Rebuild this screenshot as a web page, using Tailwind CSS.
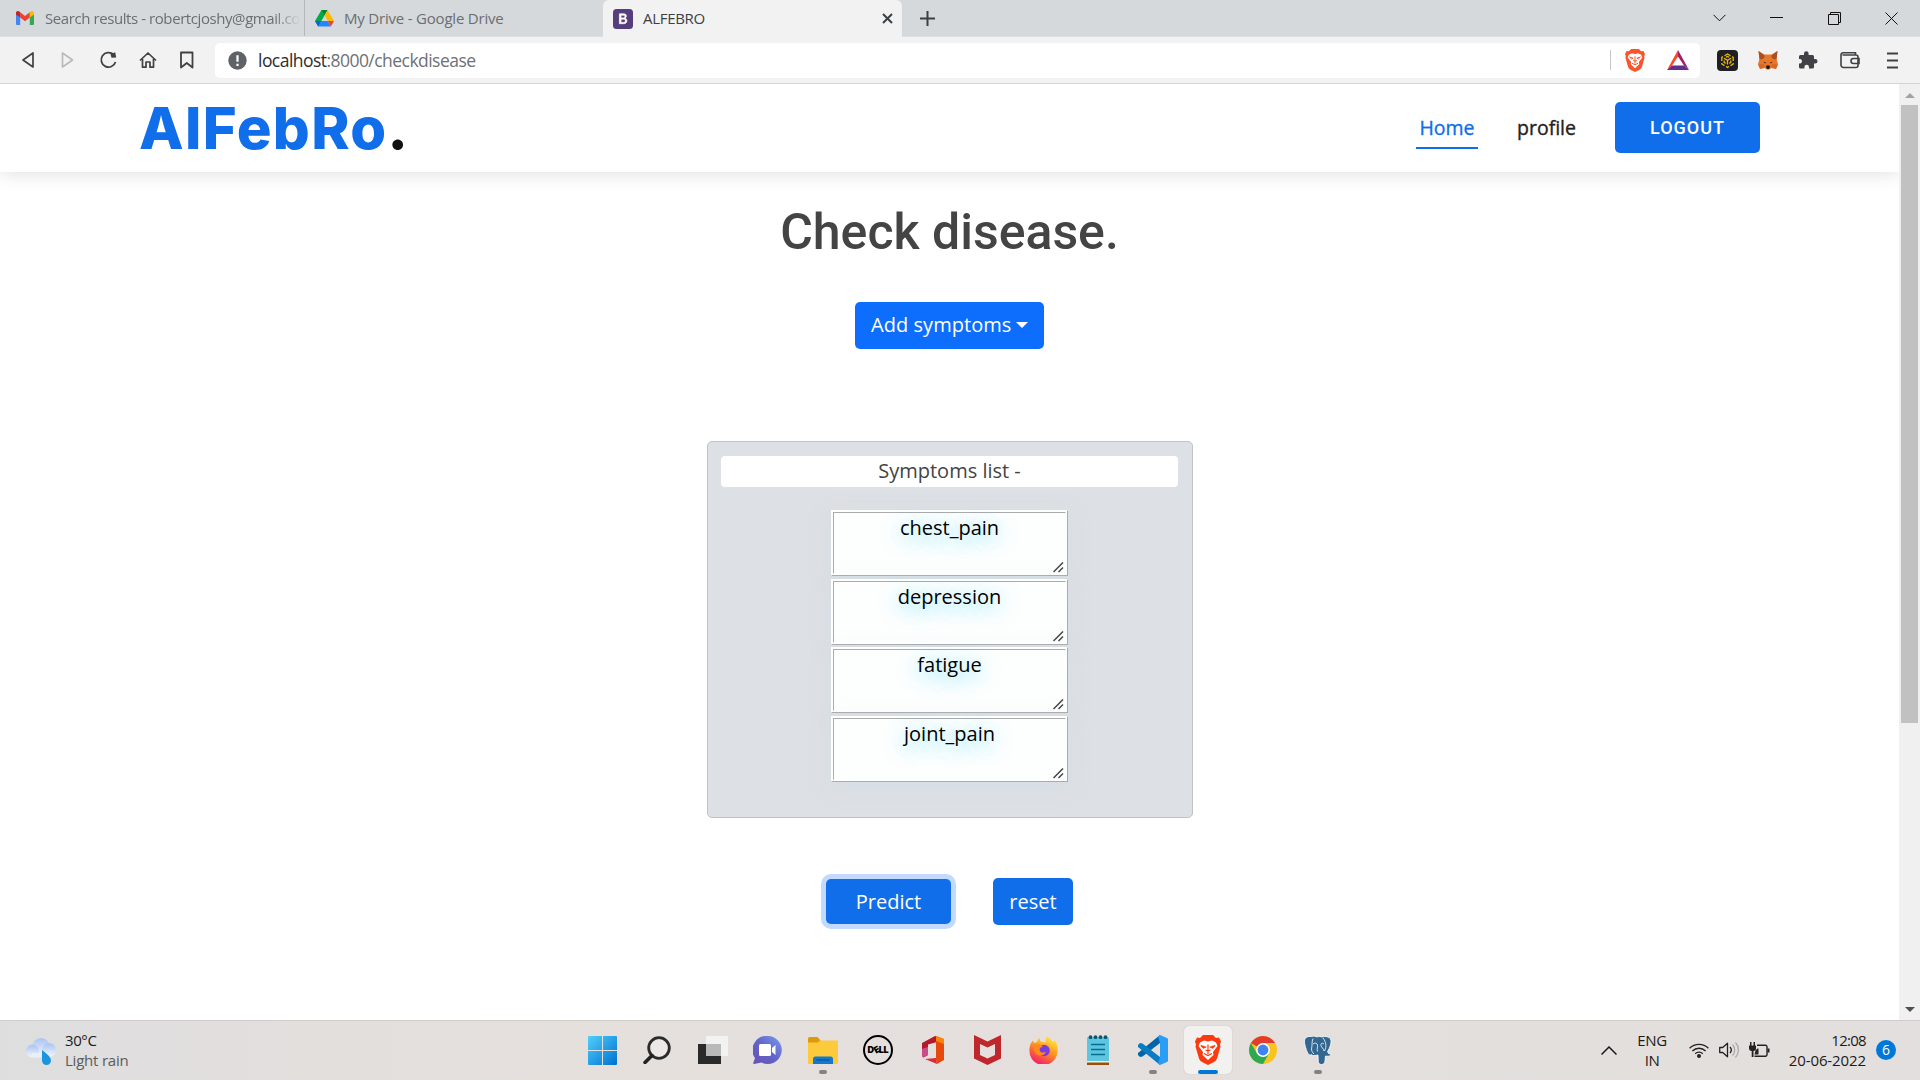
<!DOCTYPE html>
<html lang="en">
<head>
<meta charset="utf-8">
<title>ALFEBRO</title>
<script src="https://cdn.jsdelivr.net/npm/@tailwindcss/browser@4"></script>
</head>
<body class="w-[1920px] h-[1080px] overflow-hidden flex flex-col bg-white font-['Open_Sans',sans-serif]">

<!-- Tab strip -->
<div class="h-[37px] shrink-0 flex bg-[#d5d9dc] text-[15px] text-[#6b6e72] border-b border-[#dde0e3]">
  <div class="w-[305px] flex items-center pl-4 pr-1 border-r border-[#b4b8bc] bg-clip-padding">
    <svg class="w-[18px] h-[14px] shrink-0 mr-[11px]" viewBox="0 0 18 14"><path d="M0 1.8V13a1 1 0 0 0 1 1h3.2V6z" fill="#4285f4"/><path d="M18 1.8V13a1 1 0 0 1-1 1h-3.200V6z" fill="#34a853"/><path d="M4.200 1.200 9 5l4.800-3.800V6.600L9 10.300 4.200 6.600z" fill="#ea4335"/><path d="M0 1.900C0 .2 2-.6 3.300.5l.9.700v5.400L0 3.500z" fill="#c5221f"/><path d="M18 1.900C18 .2 16-.6 14.700.5l-.9.700v5.400L18 3.500z" fill="#fbbc04"/></svg>
    <div class="flex-1 overflow-hidden whitespace-nowrap tracking-[-0.42px] mask-r-from-90%">Search results - robertcjoshy@gmail.com</div>
  </div>
  <div class="w-[298px] flex items-center pl-[10px]">
    <svg class="w-[19px] h-[17px] shrink-0 mr-[10px]" viewBox="0 0 19 17"><path d="M6.500 0h6L9.600 5.300 3.300 16.500 0 11z" fill="#00ac47"/><path d="M6.500 0h6l-3 5.300z" fill="#00832d"/><path d="M12.500 0 19 11h-6.200L9.500 5.300z" fill="#ffba00"/><path d="M6.200 11h6.600l3.100 5.500H3.200z" fill="#2684fc"/><path d="M12.800 11H19l-3.100 5.500z" fill="#ea4335"/><path d="M0 11h6.200l-3 5.500z" fill="#0066da"/></svg>
    <span class="tracking-[-0.2px]">My Drive - Google Drive</span>
  </div>
  <div class="w-[299px] h-[37px] flex items-center bg-[#f2f2f2] rounded-t-[6px] pl-[10px] pr-[9px] text-[#3c4043]">
    <svg class="w-5 h-5 mr-[10px]" viewBox="0 0 20 20"><rect width="20" height="20" rx="3.500" fill="#563d7c"/><path d="M6.400 4.800h4.300c1.700 0 2.700.8 2.700 2.300 0 1.100-.7 1.900-1.600 2.200 1.300.2 2.100 1.200 2.100 2.500 0 1.900-1.300 2.900-3.300 2.900H6.400zM8 8.900h2.200c1.100 0 1.700-.5 1.700-1.400S11.400 6.200 10.300 6.200H8zm0 4.500h2.500c1.200 0 1.900-.6 1.900-1.600s-.7-1.600-2-1.600H8z" fill="#fff" stroke="#fff" stroke-width=".7"/></svg>
    <span class="tracking-[-0.3px]">ALFEBRO</span>
    <svg class="w-[11px] h-[11px] ml-auto" viewBox="0 0 11 11"><path d="m1 1 9 9M10 1l-9 9" stroke="#3c4043" stroke-width="2"/></svg>
  </div>
  <svg class="w-[15px] h-[15px] ml-[18px] mt-[11px]" viewBox="0 0 15 15"><path d="M7.500 0v15M0 7.500h15" stroke="#3c4043" stroke-width="2"/></svg>
  <div class="ml-auto flex items-center gap-[44.400px] pr-[22px] text-[#111]">
    <svg class="w-[13px] h-2" viewBox="0 0 13 8"><path d="m.5.8 6 6 6-6" fill="none" stroke="currentColor"/></svg>
    <svg class="w-[13px] h-[2px]" viewBox="0 0 13 2"><path d="M0 .5h13" stroke="currentColor"/></svg>
    <svg class="w-[13px] h-[13px]" viewBox="0 0 13 13"><path d="M.5 2.500h10v10H.5zM2.500 2.500v-2h10v10h-2" fill="none" stroke="currentColor"/></svg>
    <svg class="w-[13px] h-[13px]" viewBox="0 0 13 13"><path d="m.5.5 12 12m0-12-12 12" stroke="currentColor"/></svg>
  </div>
</div>

<!-- Toolbar -->
<div class="h-[47px] shrink-0 flex items-center bg-[#f2f2f2] border-b border-[#d3d4d6] pl-[20px] text-[#3f4144]">
  <div class="w-[195px] flex items-center gap-[19.300px]">
    <svg class="w-5 h-5" viewBox="0 0 20 20"><path d="M13 3v14L3 10z" fill="none" stroke="currentColor" stroke-width="1.700" stroke-linejoin="round"/></svg>
    <svg class="w-5 h-5" viewBox="0 0 20 20"><path d="M3.500 3v14l10-7z" fill="none" stroke="#b9babb" stroke-width="1.700" stroke-linejoin="round"/></svg>
    <svg class="w-5 h-5" viewBox="0 0 20 20"><path d="M14.500 4.500A7.300 7.300 0 1 0 16.500 12" fill="none" stroke="currentColor" stroke-width="1.800"/><path d="M11.500 4.200 16.200 2.200l1 5.300-4.700.2z" fill="currentColor"/></svg>
    <svg class="w-5 h-5" viewBox="0 0 20 20"><path d="M2 10.500 10 3l8 7.500M4.500 9v8.200H8V12h4v5.200h3.500V9" fill="none" stroke="currentColor" stroke-width="1.700" stroke-linejoin="round"/></svg>
    <svg class="w-5 h-5" viewBox="0 0 20 20"><path d="M4 2.500h11.500V17.500L9.800 13 4 17.500z" fill="none" stroke="currentColor" stroke-width="1.800" stroke-linejoin="round"/></svg>
  </div>
  <div class="w-[1485px] h-[35px] flex items-center bg-white rounded-[5px] pl-[13px] pr-[11px]">
    <svg class="w-[19px] h-[19px]" viewBox="0 0 19 19"><circle cx="9.500" cy="9.500" r="9.200" fill="#5f6368"/><path d="M9.500 4.200v6.600M9.500 12.700v2.200" stroke="#fff" stroke-width="2.200"/></svg>
    <span class="ml-[11px] text-[17.500px] tracking-[-0.54px] text-[#6e7175]"><span class="text-[#2b2d30]">localhost</span>:8000/checkdisease</span>
    <div class="ml-auto w-px h-5 bg-[#c4c5c7]"></div>
    <svg class="w-[20px] h-[23px] ml-[14px] mr-px" viewBox="0 0 26 30"><path d="M8 0h10l3 3 3-.5 2 4-1 3 .5 2-3.500 12c-.5 1.500-1.500 2.500-3 3.500l-6 3-6-3c-1.500-1-2.500-2-3-3.500L.5 11.500 1 9.500 0 6.500l2-4 3 .5z" fill="#fb542b"/><path d="M13 6.500 9 5.500 5 7.500 3.500 11l4.500 6-.5 3L13 25l5.500-5-.5-3 4.500-6L21 7.500l-4-2z" fill="#fff"/><path d="m6 10.500 4.500 1.500-2 1zM20 10.500 15.500 12l2 1zM10.500 15l2.500 1 2.500-1M13 9.500V19M9 18.500l4 2 4-2" fill="none" stroke="#fb542b" stroke-width="1.300"/></svg>
    <svg class="w-[22px] h-[20px] ml-[21px]" viewBox="0 0 22 20"><path d="M11 0v6.500L5 15.500 0 20z" fill="#ff4724"/><path d="M11 0 22 20l-5-4.500-6-9z" fill="#9e1f63"/><path d="M0 20h22l-5-4.500H5z" fill="#662d91"/></svg>
  </div>
  <div class="flex items-center pl-[17px]">
    <svg class="w-[21px] h-[21px]" viewBox="0 0 21 21"><rect width="21" height="21" rx="4" fill="#1e2026"/><g fill="none" stroke="#f0b90b" stroke-width="1.300"><path d="M7.500 5.800 10.500 4l3 1.800M4.800 11V7.300L6 6.600M16.200 11V7.300L15 6.600M4.800 13v1l2.700 1.600M16.200 13v1l-2.700 1.600M9 16.500l1.500.9 1.500-.9"/><path d="m7 8.300 3.500 2 3.500-2M10.500 10.300v4.200M7.200 10.500v2l1.500.9M13.800 10.500v2l-1.500.9M8.800 7.300l1.700-.9 1.700.9"/></g></svg>
    <svg class="w-[20px] h-[19px] ml-[19.500px]" viewBox="0 0 20 19"><path d="m.5 0 6 3.500h7l6-3.500-1 8 1.500 5-2 4.500-4.500-.7-2 1.700h-3l-2-1.700-4.500.7-2-4.500 1.500-5z" fill="#e8762b"/><path d="m.5 0 6.500 5L5 8l-3.500.5zM19.500 0 13 5l2 3 3.500.5z" fill="#a75025"/><path d="m0 13.500 5.500-.5 1.500 4-5 1zM20 13.500l-5.500-.5-1.500 4 5 1z" fill="#d66a25"/><path d="m5.500 10.500 3 1.500-2 .3zM14.500 10.500l-3 1.500 2 .3z" fill="#2b2b35"/><path d="m8 16 .5-1.500h3L12 16l-1 2H9z" fill="#1e1715"/></svg>
    <svg class="w-[20px] h-[20px] ml-[20.500px]" viewBox="0 0 20 20"><path d="M1 6.500A1.500 1.500 0 0 1 2.500 5H6V3.500a2.300 2.300 0 0 1 4.600 0V5h3.900A1.500 1.500 0 0 1 16 6.500V9h1.200a2.300 2.300 0 0 1 0 4.600H16V17a1.500 1.500 0 0 1-1.500 1.500H11V17a2.300 2.300 0 0 0-4.600 0v1.500H2.500A1.500 1.500 0 0 1 1 17v-3.500h1.200a2.300 2.300 0 0 0 0-4.500H1z" fill="currentColor"/></svg>
    <svg class="w-[20px] h-[18px] ml-[22px]" viewBox="0 0 20 18"><path d="M15.500 4V1.800H3a2 2 0 0 0-2 2V14a2.500 2.500 0 0 0 2.500 2.500H16a2 2 0 0 0 2-2V6a2 2 0 0 0-2-2H2.500M19 7.500h-5.500a2.500 2.500 0 0 0 0 5H19z" fill="none" stroke="currentColor" stroke-width="1.600"/></svg>
    <svg class="w-[11px] h-[17px] ml-[27px]" viewBox="0 0 11 17"><path d="M0 1.500h11M0 8.500h11M0 15.500h11" stroke="currentColor" stroke-width="1.800"/></svg>
  </div>
</div>

<!-- Page viewport -->
<div class="h-[936px] shrink-0 flex">
  <div class="w-[1899px] flex flex-col items-center overflow-hidden">
    <header class="w-full h-[88px] shrink-0 flex items-center pl-[139px] pr-[139px] shadow-[0_0_19px_rgba(0,0,0,0.15)]">
      <div class="font-['Inter'] font-extrabold text-[58px] tracking-[1.350px] leading-[86px] pb-px text-[#106eea]">AlFebRo<span class="text-[#111]">.</span></div>
      <nav class="ml-auto flex items-center text-[19.500px] [-webkit-text-stroke:0.35px_currentColor] text-[#222]">
        <div class="w-[62px] h-[42px] pt-[6px] text-center text-[#106eea] border-b-2 border-[#106eea]">Home</div>
        <span class="ml-[39px] w-[59px]">profile</span>
        <div class="ml-[39px] mb-px w-[145px] h-[51px] flex items-center justify-center rounded-[5px] bg-[#106eea] text-white font-['Roboto'] font-medium text-[18px] tracking-[1px] [-webkit-text-stroke:0]">LOGOUT</div>
      </nav>
    </header>

    <h1 class="mt-[30px] h-[60px] leading-[60px] font-['Roboto'] font-medium text-[50px] text-[#444]">Check disease.</h1>
    <div class="mt-[40px] w-[189px] h-[47px] shrink-0 flex items-center rounded-[5px] bg-[#0d6efd] text-white text-[20px] pl-4 pb-[2px]">
      <span class="tracking-[0.05px]">Add symptoms</span>
      <div class="ml-[5px] border-x-[6px] border-t-[6px] border-x-transparent border-t-white"></div>
    </div>

    <section class="mt-[92px] w-[486px] h-[377px] shrink-0 flex flex-col items-center rounded-[5px] border border-[#bfc3c8] bg-[#dde0e4] pt-[14px]">
      <div class="w-[457px] h-[31px] shrink-0 mb-[23px] pb-[2px] flex items-center justify-center bg-white rounded-[4px] text-[20px] text-[#444]">Symptoms list -</div>
      <div class="flex flex-col gap-[2.600px] text-[20px] text-black text-center leading-[24px] [text-shadow:0_4px_20px_rgba(0,205,255,0.75)]">
        <div class="relative w-[237px] h-[66px] border-[3px] [border-style:ridge] border-white bg-[#fdfefe] pt-[3px] shadow-[0_5px_20px_rgba(190,220,235,0.25)]">chest_pain<svg class="absolute right-[1px] bottom-[0px] w-[11px] h-[11px]" viewBox="0 0 11 11"><path d="M.5 10 10 .5M5.500 10 10 5.500" stroke="#444" stroke-width="1.500"/></svg></div>
        <div class="relative w-[237px] h-[66px] border-[3px] [border-style:ridge] border-white bg-[#fdfefe] pt-[3px] shadow-[0_5px_20px_rgba(190,220,235,0.25)]">depression<svg class="absolute right-[1px] bottom-[0px] w-[11px] h-[11px]" viewBox="0 0 11 11"><path d="M.5 10 10 .5M5.500 10 10 5.500" stroke="#444" stroke-width="1.500"/></svg></div>
        <div class="relative w-[237px] h-[66px] border-[3px] [border-style:ridge] border-white bg-[#fdfefe] pt-[3px] shadow-[0_5px_20px_rgba(190,220,235,0.25)]">fatigue<svg class="absolute right-[1px] bottom-[0px] w-[11px] h-[11px]" viewBox="0 0 11 11"><path d="M.5 10 10 .5M5.500 10 10 5.500" stroke="#444" stroke-width="1.500"/></svg></div>
        <div class="relative w-[237px] h-[66px] border-[3px] [border-style:ridge] border-white bg-[#fdfefe] pt-[3px] shadow-[0_5px_20px_rgba(190,220,235,0.25)]">joint_pain<svg class="absolute right-[1px] bottom-[0px] w-[11px] h-[11px]" viewBox="0 0 11 11"><path d="M.5 10 10 .5M5.500 10 10 5.500" stroke="#444" stroke-width="1.500"/></svg></div>
      </div>
    </section>

    <div class="mt-[60px] flex items-center gap-[42px] text-[20px] text-white">
      <div class="w-[125px] h-[45px] flex items-center justify-center rounded-[5px] bg-[#106eea] shadow-[0_0_0_5px_#c2daff]">Predict</div>
      <div class="w-[80px] h-[47px] flex items-center justify-center rounded-[5px] bg-[#106eea]">reset</div>
    </div>
  </div>

  <!-- Scrollbar -->
  <div class="w-[21px] flex flex-col items-center bg-[#f0f0f0]">
    <div class="h-[21px] pt-[9px]"><div class="border-x-[5px] border-b-[5px] border-x-transparent border-b-[#a3a3a3]"></div></div>
    <div class="w-[17px] h-[618px] bg-[#c1c1c1]"></div>
    <div class="mt-auto mb-[8px] border-x-[5px] border-t-[5px] border-x-transparent border-t-[#505050]"></div>
  </div>
</div>

<!-- Taskbar -->
<div class="h-[60px] shrink-0 flex items-center border-t border-[#cfcccb] pb-px bg-linear-to-r from-[#dfdedf] via-[#e5e0dc] via-30% to-[#e3dfde]">
  <div class="w-[571px] flex items-center pl-[26px]">
    <svg class="w-[30px] h-[27px] mt-[3px]" viewBox="0 0 30 27"><defs><linearGradient id="cl" x1="0" y1="0" x2="0" y2="1"><stop offset="0" stop-color="#a9c3f3"/><stop offset="1" stop-color="#f2f6fb"/></linearGradient></defs><circle cx="15" cy="9" r="9" fill="url(#cl)"/><circle cx="6.500" cy="13" r="6.500" fill="url(#cl)"/><circle cx="23" cy="12" r="7" fill="url(#cl)"/><path d="M6 15h17v4.500H6z" fill="#e9f0fa"/><path d="M16 12c4 3.500 9 6.500 9 10.500a4.500 4.500 0 0 1-9 0z" fill="#1c95de"/></svg>
    <div class="ml-[9px] text-[15px] leading-5 tracking-[-0.22px] text-[#1b1b1b]"><div class="tracking-[-0.4px]">30°C</div><div class="text-[#5c5b5b]">Light rain</div></div>
  </div>
  <div class="flex gap-[7.080px] pl-[7.400px]">
    <div class="w-12 h-12 flex items-center justify-center"><svg class="w-[29px] h-[29px]" viewBox="0 0 29 29"><defs><linearGradient id="wn" x1="0" y1="0" x2="1" y2="1"><stop offset="0" stop-color="#4fd0fd"/><stop offset="1" stop-color="#0070d0"/></linearGradient></defs><path d="M0 1a1 1 0 0 1 1-1h13v14H0zM15 0h13a1 1 0 0 1 1 1v13H15zM0 15h14v14H1a1 1 0 0 1-1-1zM15 15h14v13a1 1 0 0 1-1 1H15z" fill="url(#wn)"/></svg></div>
    <div class="w-12 h-12 flex items-center justify-center"><svg class="w-7 h-7" viewBox="0 0 28 28"><circle cx="16" cy="12" r="10.300" fill="#ebe8e6" stroke="#2b2b2b" stroke-width="2.800"/><path d="m9 19.500-7 7" stroke="#222" stroke-width="3.500" stroke-linecap="round"/></svg></div>
    <div class="w-12 h-12 flex items-center justify-center"><svg class="w-[30px] h-[28px]" viewBox="0 0 30 28"><path d="M0 8h23v20H0z" fill="#2a2a2a"/><path d="M8 0h22v20H8z" fill="#f4f4f4" opacity=".9"/><path d="M8 8h15v12H8z" fill="#b9b9b9"/></svg></div>
    <div class="w-12 h-12 flex items-center justify-center"><svg class="w-[29px] h-[28px]" viewBox="0 0 29 28"><defs><linearGradient id="ct" x1="0" y1="1" x2="1" y2="0"><stop offset="0" stop-color="#6a4fb5"/><stop offset=".5" stop-color="#6264c8"/><stop offset="1" stop-color="#7b9df0"/></linearGradient></defs><path d="M14.500 0a14 14 0 1 1-6 26.500L1 28c-1 0-1-.7-.6-1.500L2 22A14 14 0 0 1 14.500 0z" fill="url(#ct)"/><rect x="6" y="8" width="12" height="12" rx="1.500" fill="#fff"/><path d="m19 12 3.500-3v10L19 16z" fill="#fff"/></svg></div>
    <div class="relative w-12 h-12 flex items-center justify-center"><svg class="w-[30px] h-[27px]" viewBox="0 0 30 27"><path d="M0 1.500A1.500 1.500 0 0 1 1.500 0h8L13 4v3H0z" fill="#dd9a0c"/><path d="M0 5.500h10l2-2h17a1 1 0 0 1 1 1V26a1 1 0 0 1-1 1H1a1 1 0 0 1-1-1z" fill="#fdca3b"/><path d="M5 27v-5a2.500 2.500 0 0 1 2.500-2.500h15A2.500 2.500 0 0 1 25 22v5z" fill="#1279cf"/><path d="M8.500 23h13" stroke="#064a8c"/></svg><i class="absolute bottom-0 w-2 h-1 rounded-full bg-[#85817f]"></i></div>
    <div class="w-12 h-12 flex items-center justify-center"><div class="w-[30px] h-[30px] rounded-full border-2 border-black flex items-center justify-center font-['Inter'] font-black text-[9px] tracking-[-0.4px] text-black">D<span class="-rotate-30">E</span>LL</div></div>
    <div class="w-12 h-12 flex items-center justify-center"><svg class="w-[22px] h-[28px]" viewBox="0 0 22 28"><path d="M0 7 13 0l2 .5V6L6 8.500V19l-4.500 2.500L0 20z" fill="#b4182d"/><path d="M0 13v7l1.500 1.500L6 19v-8z" fill="#c94c8b"/><path d="m14 0 8 3v21l-7 4-1-5V5z" fill="#e64a0b"/><path d="M14 0 22 3v5l-8-3z" fill="#f78508"/><path d="m3 23 11-1 1 6z" fill="#db2b3c"/></svg></div>
    <div class="w-12 h-12 flex items-center justify-center"><svg class="w-[27px] h-[30px]" viewBox="0 0 27 30"><path d="m0 0 13.500 6.500L27 0v23.500L13.500 30 0 23.500zM6 9v11l7.500 3.500L21 20V9l-7.500 3.500z" fill="#c0272d" fill-rule="evenodd"/></svg></div>
    <div class="w-12 h-12 flex items-center justify-center"><svg class="w-[29px] h-[28px]" viewBox="0 0 29 28"><defs><linearGradient id="ff" x1=".8" y1="0" x2=".3" y2="1"><stop offset="0" stop-color="#fff04a"/><stop offset=".45" stop-color="#ff9a1f"/><stop offset="1" stop-color="#f5156c"/></linearGradient></defs><path d="M18 0c3 1.500 4 3.500 5 5.500l1.500.5 1-2C28 7 29 10 28.500 15A14 14 0 0 1 .5 15C0 11 1.500 7 4 4.500L5 7l3-1 2-4.500 1.500 4 5 1C16.500 4 17 2 18 0z" fill="url(#ff)"/><circle cx="15" cy="14.500" r="5.800" fill="#7a3be0"/><path d="M5 9c4-2 7 0 9 2-3 0-4 2-3 4s4 2 6 .5c-2 6-10 5-12-1z" fill="#ff8a1c"/></svg></div>
    <div class="w-12 h-12 flex items-center justify-center"><svg class="w-[22px] h-[30px]" viewBox="0 0 22 30"><path d="M0 2.500h22V26H0z" fill="#5cc6e0"/><path d="M0 27h22v3H0z" fill="#9a4f0c"/><path d="M0 26h22v1.500H0z" fill="#f4f0e8"/><path d="M4 9.500h14M4 14.500h14M4 19.500h14" stroke="#0a6c90" stroke-width="1.600"/><g fill="#0c5570"><circle cx="3.500" cy="2.200" r="1.900"/><circle cx="8.500" cy="2.200" r="1.900"/><circle cx="13.500" cy="2.200" r="1.900"/><circle cx="18.500" cy="2.200" r="1.900"/></g></svg></div>
    <div class="relative w-12 h-12 flex items-center justify-center"><svg class="w-[30px] h-[30px]" viewBox="0 0 30 30"><path d="M22 0v8L4.500 21.500 2 22 0 20v-2z" fill="#0065a9"/><path d="M22 30v-8L4.500 8.500 2 8 0 10v2z" fill="#0a7bc4"/><path d="m22 0 7 3a2 2 0 0 1 1 2v20a2 2 0 0 1-1 2l-7 3-2-1.500L22 22V8l-2-6.500z" fill="#2a9df4"/></svg><i class="absolute bottom-0 w-2 h-1 rounded-full bg-[#85817f]"></i></div>
    <div class="relative w-12 h-12 flex items-center justify-center rounded-[5px] bg-[#f3f1f0] shadow-[0_0_1px_#aaa]"><svg class="w-[26px] h-[30px]" viewBox="0 0 26 30"><path d="M8 0h10l3 3 3-.5 2 4-1 3 .5 2-3.500 12c-.5 1.500-1.500 2.500-3 3.500l-6 3-6-3c-1.500-1-2.500-2-3-3.500L.5 11.500 1 9.500 0 6.500l2-4 3 .5z" fill="#fb3a10"/><path d="M13 6.500 9 5.500 5 7.500 3.500 11l4.500 6-.5 3L13 25l5.500-5-.5-3 4.500-6L21 7.500l-4-2z" fill="#fff"/><path d="m6 10.500 4.500 1.500-2 1zM20 10.500 15.500 12l2 1zM10.500 15l2.500 1 2.500-1M13 9.500V19M9 18.500l4 2 4-2" fill="none" stroke="#fb3a10" stroke-width="1.200"/></svg><i class="absolute bottom-0 w-5 h-1 rounded-full bg-[#0078d7]"></i></div>
    <div class="w-12 h-12 flex items-center justify-center"><svg class="w-[28px] h-[28px]" viewBox="0 0 28 28"><circle cx="14" cy="14" r="14" fill="#fcc31e"/><path d="M14 14 1.900 7A14 14 0 0 1 26.100 7H14z" fill="#e33b2e"/><path d="M1.900 7A14 14 0 0 0 14 28l6-10.500L14 14l-6 3.500z" fill="#2da94f"/><circle cx="14" cy="14" r="6.900" fill="#fff"/><circle cx="14" cy="14" r="5.400" fill="#3f82f0"/></svg></div>
    <div class="relative w-12 h-12 flex items-center justify-center"><svg class="w-[28px] h-[29px]" viewBox="0 0 28 29"><path d="M7 .5c3-.8 5 0 6 .5 2-.8 4-.5 5 0 3-1 7-.5 8.500 2s-.5 9-3 12.500l1 2 3 1c-1.500 2-4 2-6 1.500l-.5 5c-.3 2.500-1.500 3.500-3.500 3.500s-3-1-3.200-3L14 19l-3 .5c-2 .2-3 0-3.500-1-1 1-2.500.5-3.500-1C2 14 0 7 .5 4 1 1.500 4 0 7 .5z" fill="#336791" stroke="#fff" stroke-width=".8"/><path d="M9 2.500C7.500 6 8.500 9 7.500 13c0 2 1 3.500 2.500 5M9 8c2-1.500 4-1 4.500 1s-1 4 0 6.500M19 2c3 4 4 8 1.500 13M20 8c-2-1.500-3.500-.5-3 1.500s2.500 3 3 5.500" fill="none" stroke="#fff" stroke-width=".8"/></svg><i class="absolute bottom-0 w-2 h-1 rounded-full bg-[#85817f]"></i></div>
  </div>
  <div class="ml-auto flex items-center pr-6 text-[15px] leading-5 tracking-[-0.1px] text-[#1b1b1b]">
    <svg class="w-4 h-[9px]" viewBox="0 0 16 9"><path d="m.5 8.500 7.500-7.500 7.500 7.500" fill="none" stroke="#1b1b1b" stroke-width="1.500"/></svg>
    <div class="ml-[20px] w-[30px] text-center tracking-[-0.4px]"><div>ENG</div><div>IN</div></div>
    <svg class="ml-[22px] w-[20px] h-[16px]" viewBox="0 0 20 16"><g fill="none" stroke="#222" stroke-width="1.300"><path d="M.6 6.200a13.300 13.300 0 0 1 18.800 0M3.400 9a9.300 9.300 0 0 1 13.200 0M6.200 11.700a5.400 5.400 0 0 1 7.600 0"/></g><circle cx="10" cy="14" r="2" fill="#222"/></svg>
    <svg class="ml-[10px] w-[21px] h-[16px]" viewBox="0 0 21 16"><path d="M.7 5.500h3L8.500 1.200v13.600L3.700 10.500h-3z" fill="none" stroke="#222" stroke-width="1.300" stroke-linejoin="round"/><path d="M11 5a4.500 4.500 0 0 1 0 6" fill="none" stroke="#222" stroke-width="1.300"/><path d="M13.500 2.500a8 8 0 0 1 0 11M16.500.5a11 11 0 0 1 0 15" fill="none" stroke="#aaa8a7" stroke-width="1.200"/></svg>
    <svg class="ml-[9px] w-[21px] h-[16px]" viewBox="0 0 21 16"><path d="M8 3.200h8.500a1.500 1.500 0 0 1 1.500 1.500v8a1.500 1.500 0 0 1-1.500 1.500H5.500" fill="none" stroke="#222" stroke-width="1.400"/><path d="M18.500 6.500h2v4h-2zM5.500 12.500h4v-6h-1l-2 2z" fill="#222"/><path d="M0 3.500h7v3A2.500 2.500 0 0 1 4.500 9v6H2.700V9A2.500 2.500 0 0 1 0 6.500zM1 0h1.500v4H1zM4.500 0H6v4H4.500z" fill="#222"/></svg>
    <div class="ml-[18px] w-[78px] text-right"><div class="tracking-[-0.7px]">12:08</div><div class="whitespace-nowrap">20-06-2022</div></div>
    <div class="ml-[10px] w-5 h-5 rounded-full bg-[#0078d7] flex items-center justify-center text-white text-[14px]">6</div>
  </div>
</div>
</body>
</html>
